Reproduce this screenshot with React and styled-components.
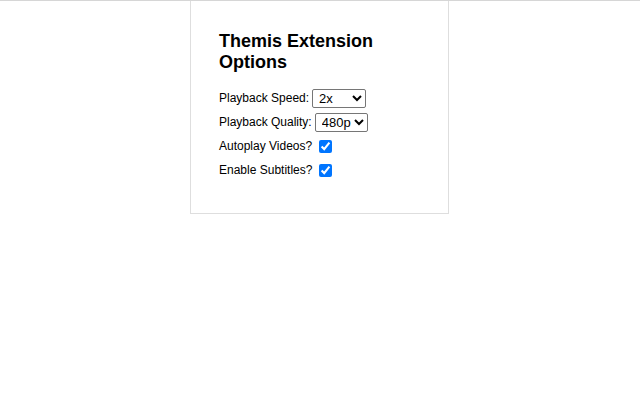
import React from "react";
import styled, { createGlobalStyle } from "styled-components";

const GlobalStyle = createGlobalStyle`
  html, body {
    margin: 0;
    padding: 0;
    background: #fff;
  }
  body {
    font-family: "Liberation Sans", Arial, sans-serif;
    border-top: 1px solid #d6d6d6;
  }
`;

const Page = styled.div`
  display: flex;
  justify-content: center;
  padding-right: 1px;
`;

const Card = styled.div`
  width: 201px;
  padding: 30px 28px 31px;
  border: 1px solid #dedede;
  border-top: none;
  color: #000;
`;

const Title = styled.h2`
  margin: 0 0 13px;
  font-size: 18px;
  line-height: 21px;
  font-weight: bold;
`;

const Row = styled.label`
  display: flex;
  align-items: center;
  height: 24px;
  font-size: 12px;
`;

const Select = styled.select`
  width: ${(p) => p.$width}px;
  height: 19px;
  margin-left: 3px;
  padding: 0 0 0 2px;
  font-family: "Liberation Sans", Arial, sans-serif;
  font-size: 13px;
  border: 1px solid #767676;
  border-radius: 2px;
  background: #fff;
  color: #000;
`;

const Check = styled.input`
  width: 13px;
  height: 13px;
  margin: 0 0 0 7px;
  accent-color: #0075ff;
`;

export default function App() {
  return (
    <>
      <GlobalStyle />
      <Page>
        <Card>
          <Title>Themis Extension Options</Title>
          <Row>
            Playback Speed:
            <Select $width={54} defaultValue="2x">
              <option>1x</option>
              <option>1.5x</option>
              <option>2x</option>
            </Select>
          </Row>
          <Row>
            Playback Quality:
            <Select $width={53} defaultValue="480p">
              <option>360p</option>
              <option>480p</option>
              <option>720p</option>
            </Select>
          </Row>
          <Row>
            Autoplay Videos?
            <Check type="checkbox" defaultChecked />
          </Row>
          <Row>
            Enable Subtitles?
            <Check type="checkbox" defaultChecked />
          </Row>
        </Card>
      </Page>
    </>
  );
}
